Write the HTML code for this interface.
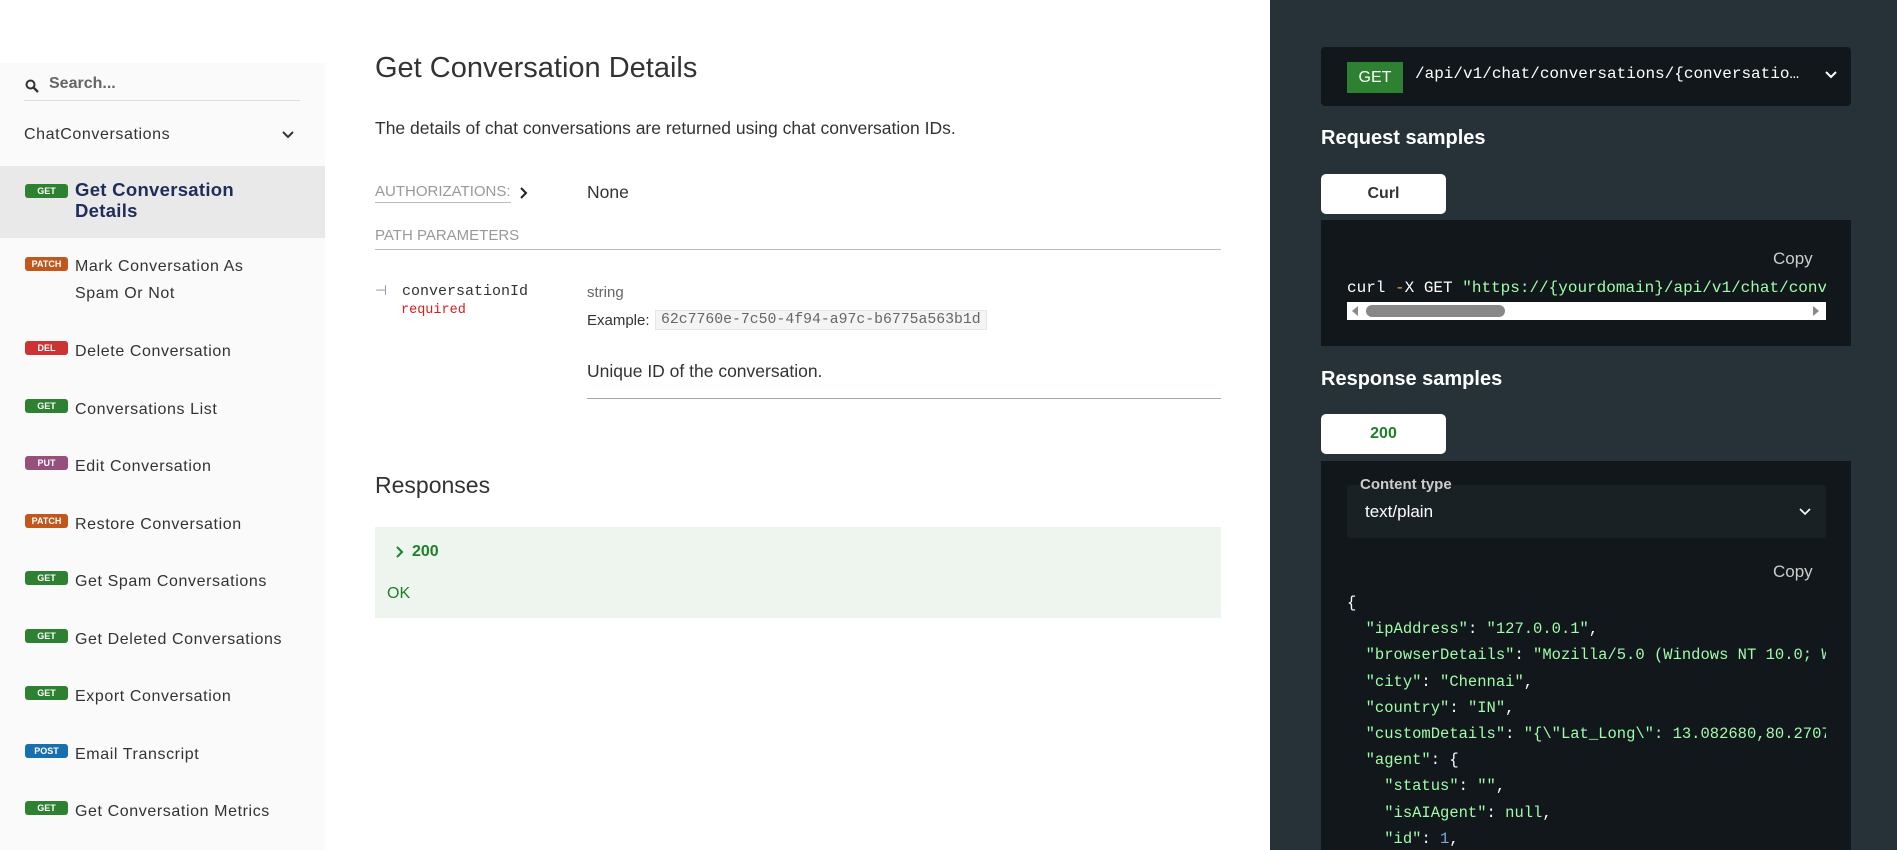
<!DOCTYPE html>
<html><head><meta charset="utf-8"><style>
*{margin:0;padding:0;box-sizing:border-box}
body{width:1897px;height:850px;overflow:hidden;background:#fff;font-family:"Liberation Sans",sans-serif;position:relative}
.a{position:absolute;white-space:nowrap}
#side{position:absolute;left:0;top:63px;width:325px;height:787px;background:#fafafa}
.badge{position:absolute;left:25px;width:43px;height:14px;border-radius:3px;color:#fff;font-size:9px;font-weight:bold;text-align:center;line-height:14px}
.item{position:absolute;left:75px;font-size:16px;letter-spacing:0.6px;color:#333;line-height:27px}
.g{background:#2f8132}.p{background:#bf581d}.d{background:#cc3333}.pu{background:#95507c}.po{background:#186fae}
.mono{font-family:"Liberation Mono",monospace}
#right{position:absolute;left:1270px;top:0;width:627px;height:850px;background:#263238}
.tab{position:absolute;left:1321px;width:125px;height:40px;background:#fff;border-radius:5px;text-align:center;line-height:40px;font-size:16px;font-weight:bold}
.js{position:absolute;left:1347px;font-family:"Liberation Mono",monospace;font-size:15.5px;color:#fff;white-space:pre}
.s{color:#a0fbaa}
</style></head><body>
<div id="side">
 <svg class="a" style="left:25px;top:16px" width="14" height="14" viewBox="0 0 14 14"><circle cx="5.5" cy="5.5" r="4" fill="none" stroke="#333" stroke-width="2"/><path d="M8.5 8.5L13 13" stroke="#333" stroke-width="2.4"/></svg>
 <div class="a" style="left:49px;top:12px;font-size:16px;font-weight:bold;color:#666">Search...</div>
 <div class="a" style="left:24px;top:37px;width:276px;height:1px;background:#ddd"></div>
 <div class="a" style="left:24px;top:63px;font-size:16px;letter-spacing:0.6px;color:#333">ChatConversations</div>
 <svg class="a" style="left:281px;top:67px" width="14" height="10" viewBox="0 0 14 10"><path d="M2 2l5 5 5-5" fill="none" stroke="#333" stroke-width="2"/></svg>
 <div class="a" style="left:0;top:103px;width:325px;height:72px;background:#e9e9e9"></div>
</div>
<div class="badge g" style="top:184px">GET</div>
<div class="item" style="top:179px;font-weight:bold;color:#1f2d5a;font-size:18.5px;letter-spacing:0.3px;line-height:21px">Get Conversation<br>Details</div>
<div class="badge p" style="top:257px">PATCH</div><div class="item" style="top:253px">Mark Conversation As<br>Spam Or Not</div>
<div class="badge d" style="top:341px">DEL</div><div class="item" style="top:338px">Delete Conversation</div>
<div class="badge g" style="top:399px">GET</div><div class="item" style="top:396px">Conversations List</div>
<div class="badge pu" style="top:456px">PUT</div><div class="item" style="top:453px">Edit Conversation</div>
<div class="badge p" style="top:514px">PATCH</div><div class="item" style="top:511px">Restore Conversation</div>
<div class="badge g" style="top:571px">GET</div><div class="item" style="top:568px">Get Spam Conversations</div>
<div class="badge g" style="top:629px">GET</div><div class="item" style="top:626px">Get Deleted Conversations</div>
<div class="badge g" style="top:686px">GET</div><div class="item" style="top:683px">Export Conversation</div>
<div class="badge po" style="top:744px">POST</div><div class="item" style="top:741px">Email Transcript</div>
<div class="badge g" style="top:801px">GET</div><div class="item" style="top:798px">Get Conversation Metrics</div>

<div class="a" style="left:375px;top:52px;font-size:29px;color:#333">Get Conversation Details</div>
<div class="a" style="left:375px;top:118px;font-size:17.5px;color:#333">The details of chat conversations are returned using chat conversation IDs.</div>
<div class="a" style="left:375px;top:183px;font-size:15px;color:#999;border-bottom:1px solid #bbb;padding-bottom:2px">AUTHORIZATIONS:</div>
<svg class="a" style="left:519px;top:186px" width="10" height="14" viewBox="0 0 10 14"><path d="M2 2l5 5-5 5" fill="none" stroke="#222" stroke-width="2"/></svg>
<div class="a" style="left:587px;top:182px;font-size:17.5px;color:#333">None</div>
<div class="a" style="left:375px;top:227px;font-size:15px;color:#999">PATH PARAMETERS</div>
<div class="a" style="left:375px;top:249px;width:846px;height:1px;background:#bbb"></div>
<div class="a" style="left:375px;top:282px;font-size:14px;color:#8a8aa8">⊣</div>
<div class="a mono" style="left:402px;top:283px;font-size:15px;color:#333">conversationId</div>
<div class="a mono" style="left:401px;top:303px;font-size:13.5px;color:#d41f1c">required</div>
<div class="a" style="left:587px;top:284px;font-size:15px;color:#666">string</div>
<div class="a" style="left:587px;top:312px;font-size:15px;color:#333">Example:</div>
<div class="a mono" style="left:655px;top:310px;font-size:14.8px;color:#666;background:#f4f4f4;border:1px solid #e6e6e6;padding:1px 5px">62c7760e-7c50-4f94-a97c-b6775a563b1d</div>
<div class="a" style="left:587px;top:361px;font-size:17.5px;color:#333">Unique ID of the conversation.</div>
<div class="a" style="left:587px;top:398px;width:634px;height:1px;background:#9aa8ad"></div>
<div class="a" style="left:375px;top:472px;font-size:23px;color:#333">Responses</div>
<div class="a" style="left:375px;top:527px;width:846px;height:91px;background:#eef5ee"></div>
<svg class="a" style="left:395px;top:545px" width="10" height="14" viewBox="0 0 10 14"><path d="M2 2l5 5-5 5" fill="none" stroke="#1d8127" stroke-width="2"/></svg>
<div class="a" style="left:412px;top:543px;font-size:16px;font-weight:bold;color:#1d8127">200</div>
<div class="a" style="left:387px;top:585px;font-size:16px;color:#1d8127">OK</div>

<div id="right"></div>
<div class="a" style="left:1321px;top:47px;width:530px;height:59px;background:#11171a;border-radius:4px"></div>
<div class="a" style="left:1347px;top:62px;width:56px;height:31px;background:#2f8132;color:#fff;font-size:16px;text-align:center;line-height:31px">GET</div>
<div class="a mono" style="left:1415px;top:65px;font-size:16px;color:#fff">/api/v1/chat/conversations/{conversatio…</div>
<svg class="a" style="left:1824px;top:70px" width="14" height="10" viewBox="0 0 14 10"><path d="M2 2l5 5 5-5" fill="none" stroke="#fff" stroke-width="2"/></svg>
<div class="a" style="left:1321px;top:127px;font-size:20px;font-weight:bold;color:#fff">Request samples</div>
<div class="tab" style="top:174px;color:#333">Curl</div>
<div class="a" style="left:1321px;top:220px;width:530px;height:126px;background:#11171a"></div>
<div class="a" style="left:1773px;top:249px;font-size:17px;color:#ccc">Copy</div>
<div class="a mono" style="left:1347px;top:279px;width:479px;overflow:hidden;font-size:16px;color:#fff">curl <span style="color:#e4a657">-</span>X GET <span class="s">"https://{yourdomain}/api/v1/chat/conversations</span></div>
<div class="a" style="left:1347px;top:302px;width:479px;height:18px;background:#fff"></div>
<div class="a" style="left:1366px;top:305px;width:139px;height:12px;background:#888;border-radius:6px"></div>
<svg class="a" style="left:1350px;top:304px" width="10" height="14"><path d="M8 2v10L2 7z" fill="#888"/></svg>
<svg class="a" style="left:1811px;top:304px" width="10" height="14"><path d="M2 2v10l6-5z" fill="#888"/></svg>
<div class="a" style="left:1321px;top:368px;font-size:20px;font-weight:bold;color:#fff">Response samples</div>
<div class="tab" style="top:414px;color:#1d8127">200</div>
<div class="a" style="left:1321px;top:461px;width:530px;height:389px;background:#11171a"></div>
<div class="a" style="left:1347px;top:485px;width:479px;height:53px;background:#1a2124;border-radius:3px"></div>
<div class="a" style="left:1360px;top:476px;font-size:15px;font-weight:bold;color:#ccc">Content type</div>
<div class="a" style="left:1365px;top:502px;font-size:17px;color:#fff">text/plain</div>
<svg class="a" style="left:1798px;top:507px" width="14" height="10" viewBox="0 0 14 10"><path d="M2 2l5 5 5-5" fill="none" stroke="#fff" stroke-width="1.6"/></svg>
<div class="a" style="left:1773px;top:562px;font-size:17px;color:#ccc">Copy</div>
<div class="a" style="left:1347px;top:590px;width:479px;height:260px;overflow:hidden">
<div class="js" style="left:0;top:0;line-height:26.2px">{
  <span class="s">"ipAddress"</span>: <span class="s">"127.0.0.1"</span>,
  <span class="s">"browserDetails"</span>: <span class="s">"Mozilla/5.0 (Windows NT 10.0; Win64)"</span>,
  <span class="s">"city"</span>: <span class="s">"Chennai"</span>,
  <span class="s">"country"</span>: <span class="s">"IN"</span>,
  <span class="s">"customDetails"</span>: <span class="s">"{\"Lat_Long\": 13.082680,80.270718}"</span>,
  <span class="s">"agent"</span>: {
    <span class="s">"status"</span>: <span class="s">""</span>,
    <span class="s">"isAIAgent"</span>: <span class="s">null</span>,
    <span class="s">"id"</span>: <span style="color:#7aa6da">1</span>,</div>
</div>
</body></html>
